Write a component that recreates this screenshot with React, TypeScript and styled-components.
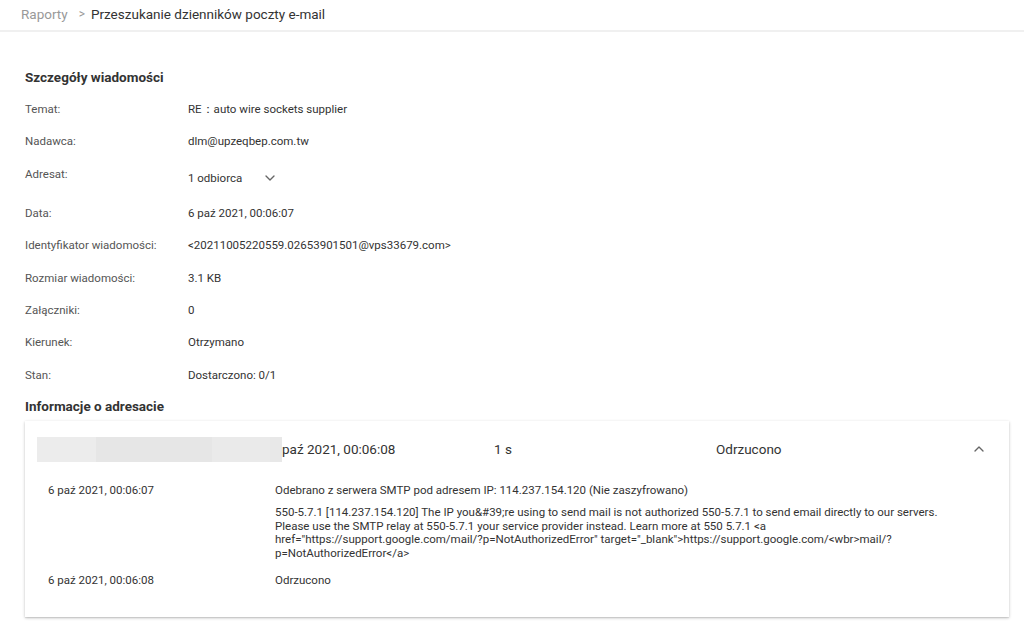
import React from "react";
import styled, { createGlobalStyle } from "styled-components";

const GlobalStyle = createGlobalStyle`
  html, body {
    margin: 0;
    padding: 0;
    background: #fff;
    font-family: Roboto, "Liberation Sans", Arial, sans-serif;
    color: #333;
  }
`;

const Page = styled.div`
  width: 1024px;
  height: 630px;
  overflow: hidden;
  background: #fff;
`;

const Breadcrumbs = styled.div`
  display: flex;
  align-items: center;
  box-sizing: border-box;
  height: 32px;
  padding: 0 0 3px 21px;
  border-bottom: 2px solid #f0f0f0;
  font-size: 13.5px;
`;

const Crumb = styled.span<{ $current?: boolean }>`
  color: ${(p) => (p.$current ? "#333" : "#999")};
`;

const Sep = styled.span`
  color: #999;
  margin: 0 6px 0 11px;
  font-size: 12px;
`;

const Content = styled.div`
  padding: 37px 15px 0 25px;
`;

const SectionTitle = styled.div`
  font-size: 13.5px;
  font-weight: 700;
  color: #333;
  line-height: 16px;
`;

const Details = styled.div`
  margin-top: 8px;
  display: flex;
  flex-direction: column;
  margin-bottom: 7px;
`;

const Row = styled.div<{ $tall?: boolean }>`
  display: grid;
  grid-template-columns: 163px 1fr;
  align-items: start;
  height: ${(p) => (p.$tall ? "39px" : "32.4px")};
  font-size: 11.5px;
  line-height: 16px;
  padding-top: 8px;
  box-sizing: border-box;
`;

const Label = styled.div`
  color: #555;
`;

const Value = styled.div`
  color: #333;
  display: flex;
  align-items: center;
`;

const Recipients = styled.div`
  display: flex;
  align-items: center;
  gap: 20px;
  margin-top: 4px;
`;

const Card = styled.div`
  margin-top: 7px;
  box-shadow: 0 1px 3px rgba(0, 0, 0, 0.22), 0 1px 1px rgba(0, 0, 0, 0.08);
  background: #fff;
  padding-bottom: 17px;
`;

const CardHeader = styled.div`
  display: flex;
  align-items: center;
  height: 56px;
  padding: 0 22px 0 12px;
  font-size: 13.5px;
  color: #333;
`;

const Redacted = styled.div`
  width: 245px;
  height: 25px;
  background: linear-gradient(
    to right,
    #ececec 0,
    #ececec 59px,
    #e6e6e6 59px,
    #e6e6e6 175px,
    #eaeaea 175px,
    #eaeaea 233px,
    #e8e8e8 233px
  );
`;

const HeaderCell = styled.div<{ $w: number }>`
  width: ${(p) => p.$w}px;
  flex-shrink: 0;
`;

const IconBtn = styled.div`
  margin-left: auto;
  display: flex;
  align-items: center;
  color: #666;
`;

const Events = styled.div`
  display: flex;
  flex-direction: column;
  padding: 5px 0 0 23px;
  font-size: 11.5px;
  color: #333;
`;

const Event = styled.div`
  display: grid;
  grid-template-columns: 227px 1fr;
  padding-bottom: 12px;
`;

const EventTime = styled.div`
  line-height: 16px;
`;

const EventBody = styled.div`
  display: flex;
  flex-direction: column;
  gap: 8px;
  max-width: 680px;
`;

const Line = styled.div<{ $single?: boolean }>`
  line-height: ${(p) => (p.$single ? "16px" : "13.5px")};
`;

const Chevron = ({ up }: { up?: boolean }) => (
  <svg width="16" height="16" viewBox="0 0 24 24" fill="none">
    <path
      d={up ? "M6 15l6-6 6 6" : "M6 9l6 6 6-6"}
      stroke="#666"
      strokeWidth="2"
      strokeLinecap="round"
      strokeLinejoin="round"
    />
  </svg>
);

const details: [string, string][] = [
  ["Data:", "6 paź 2021, 00:06:07"],
  ["Identyfikator wiadomości:", "<20211005220559.02653901501@vps33679.com>"],
  ["Rozmiar wiadomości:", "3.1 KB"],
  ["Załączniki:", "0"],
  ["Kierunek:", "Otrzymano"],
  ["Stan:", "Dostarczono: 0/1"],
];

export default function App() {
  return (
    <Page>
      <GlobalStyle />
      <Breadcrumbs>
        <Crumb>Raporty</Crumb>
        <Sep>&gt;</Sep>
        <Crumb $current>Przeszukanie dzienników poczty e-mail</Crumb>
      </Breadcrumbs>
      <Content>
        <SectionTitle>Szczegóły wiadomości</SectionTitle>
        <Details>
          <Row>
            <Label>Temat:</Label>
            <Value>RE：auto wire sockets supplier</Value>
          </Row>
          <Row>
            <Label>Nadawca:</Label>
            <Value>dlm@upzeqbep.com.tw</Value>
          </Row>
          <Row $tall>
            <Label>Adresat:</Label>
            <Recipients>
              <span>1 odbiorca</span>
              <Chevron />
            </Recipients>
          </Row>
          {details.map(([l, v]) => (
            <Row key={l}>
              <Label>{l}</Label>
              <Value>{v}</Value>
            </Row>
          ))}
        </Details>
        <SectionTitle>Informacje o adresacie</SectionTitle>
        <Card>
          <CardHeader>
            <Redacted />
            <HeaderCell $w={212}>paź 2021, 00:06:08</HeaderCell>
            <HeaderCell $w={222}>1 s</HeaderCell>
            <HeaderCell $w={120}>Odrzucono</HeaderCell>
            <IconBtn>
              <Chevron up />
            </IconBtn>
          </CardHeader>
          <Events>
            <Event>
              <EventTime>6 paź 2021, 00:06:07</EventTime>
              <EventBody>
                <Line $single>
                  Odebrano z serwera SMTP pod adresem IP: 114.237.154.120 (Nie zaszyfrowano)
                </Line>
                <Line>
                  550-5.7.1 [114.237.154.120] The IP you&amp;#39;re using to send mail is not
                  authorized 550-5.7.1 to send email directly to our servers. Please use the SMTP
                  relay at 550-5.7.1 your service provider instead. Learn more at 550 5.7.1 &lt;a
                  href="https://support.google.com/mail/?p=NotAuthorizedError"
                  target="_blank"&gt;https://support.google.com/&lt;wbr&gt;mail/?p=NotAuthorizedError&lt;/a&gt;
                </Line>
              </EventBody>
            </Event>
            <Event>
              <EventTime>6 paź 2021, 00:06:08</EventTime>
              <EventBody>
                <Line $single>Odrzucono</Line>
              </EventBody>
            </Event>
          </Events>
        </Card>
      </Content>
    </Page>
  );
}
